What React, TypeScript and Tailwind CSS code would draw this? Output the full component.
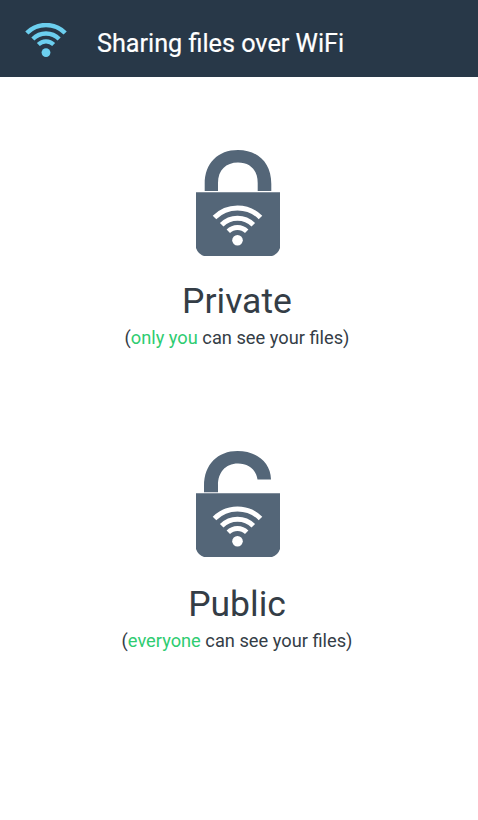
function WifiArcs({ className }: { className: string }) {
  return (
    <svg className={className} viewBox="0 0 50 42" fill="none" stroke="currentColor">
      <path d="M2 12A32.5 32.5 0 0 1 48 12" strokeWidth="5.4" />
      <path d="M9.2 19.2A22.3 22.3 0 0 1 40.8 19.2" strokeWidth="5.2" />
      <path d="M15.8 25.8A13 13 0 0 1 34.2 25.8" strokeWidth="5" />
      <circle cx="25" cy="35.5" r="5.3" fill="currentColor" stroke="none" />
    </svg>
  );
}

function Lock({ open = false }: { open?: boolean }) {
  return (
    <svg className="mr-[2px] block h-[106px] w-[84px] text-[#546678]" viewBox="0 0 84 106" fill="currentColor">
      {open ? (
        <path d="M8 41.3V35C8 13 22 0 41.5 0C60 0 74.5 11 75 28.5H61.5C60 18 52 12.5 42 12.5C29 12.5 22 22 22 34V41.3Z" />
      ) : (
        <path d="M8.7 41V34C8.7 13 22 0 42 0C62 0 75.3 13 75.3 34V41H61.7V33C61.7 20 54 12.5 42 12.5C30 12.5 22 20 22 33V41Z" />
      )}
      <path d="M0 42.3H84V98Q82 104 76 106H8Q2 104 0 98Z" />
      <g fill="none" stroke="white">
        <path d="M18.5 67.5A32.5 32.5 0 0 1 64.5 67.5" strokeWidth="5" />
        <path d="M25.7 74.7A22.3 22.3 0 0 1 57.3 74.7" strokeWidth="5" />
        <path d="M32.3 81.3A13 13 0 0 1 50.7 81.3" strokeWidth="4.8" />
        <circle cx="41.5" cy="90.2" r="5.3" fill="white" stroke="none" />
      </g>
    </svg>
  );
}

export default function App() {
  return (
    <div className="h-[820px] w-[478px] overflow-hidden bg-white font-['Roboto',sans-serif] text-[#343d46]">
      <header className="flex h-[77px] bg-[#283848] pl-[25px] text-white">
        <WifiArcs className="mt-[23px] h-[35px] w-[42px] shrink-0 text-[#6ccfef]" />
        <h1 className="ml-[30px] pt-[29px] text-[25.2px] leading-[30px] whitespace-nowrap [-webkit-text-stroke:0.2px_currentColor]">Sharing files over WiFi</h1>
      </header>
      <main className="flex flex-col items-center pt-[73px] whitespace-nowrap">
        <section className="flex h-[301px] flex-col items-center">
          <Lock />
          <h2 className="mt-[24px] mr-[4px] text-[35.5px] leading-[42px]">Private</h2>
          <p className="mt-[5px] mr-[4px] text-[18.25px] leading-[22px]">
            (<span className="text-[#2ecc71]">only you</span> can see your files)
          </p>
        </section>
        <section className="flex flex-col items-center">
          <Lock open />
          <h2 className="mt-[26px] mr-[4px] text-[35.5px] leading-[42px]">Public</h2>
          <p className="mt-[5px] mr-[4px] text-[18.25px] leading-[22px]">
            (<span className="text-[#2ecc71]">everyone</span> can see your files)
          </p>
        </section>
      </main>
    </div>
  );
}
